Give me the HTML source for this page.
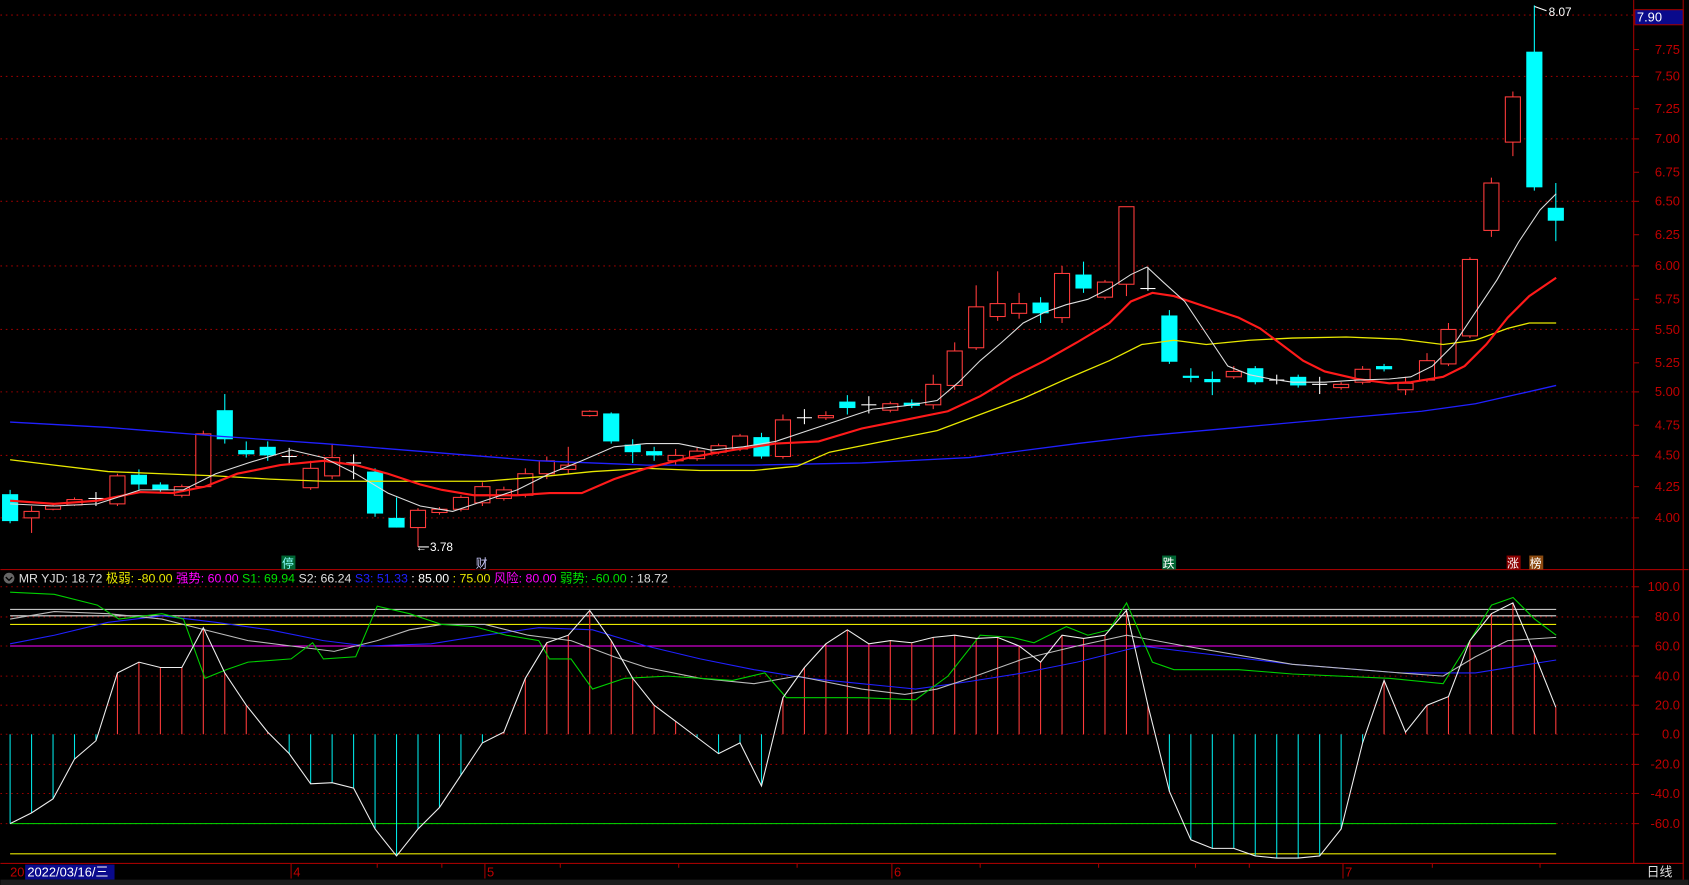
<!DOCTYPE html>
<html><head><meta charset="utf-8"><style>
html,body{margin:0;padding:0;background:#000;overflow:hidden}
svg{display:block}
text{font-family:"Liberation Sans","Noto Sans CJK SC",sans-serif}
</style></head><body>
<svg id="s" width="1689" height="885" viewBox="0 0 1568 822" xmlns="http://www.w3.org/2000/svg"></svg>
<script>
const s=document.getElementById('s');let h='';
const R='#a00000';
// grid dotted lines main
const labs=[[7.75,46],[7.50,71],[7.25,101],[7.00,129],[6.75,160],[6.50,187],[6.25,218],[6.00,247],[5.75,278],[5.50,306],[5.25,337],[5.00,364],[4.75,395],[4.50,423],[4.25,452],[4.00,481]];
[14,71,129,187,247,306,364,423,481].forEach(y=>h+=`<line x1="0" y1="${y}" x2="1517" y2="${y}" stroke="#900" stroke-dasharray="1.5 3.5" stroke-width="1"/>`);
labs.forEach(([p,y])=>{h+=`<line x1="1517" y1="${y}" x2="1522" y2="${y}" stroke="${R}"/><text x="1560" y="${y+4}" fill="#c00000" font-size="12" text-anchor="end">${p.toFixed(2)}</text>`});
// indicator grid
const il=[[100,545],[80,573],[60,600],[40,628],[20,655],[0,682],[-20,710],[-40,737],[-60,765]];
il.forEach(([v,y])=>{h+=`<line x1="0" y1="${y}" x2="1517" y2="${y}" stroke="#900" stroke-dasharray="1.5 3.5"/><line x1="1517" y1="${y}" x2="1522" y2="${y}" stroke="${R}"/><text x="1560" y="${y+4}" fill="#c00000" font-size="12" text-anchor="end">${v.toFixed(2).replace(/(\.\d)0$/,'$1')}</text>`});
// frames
h+=`<line x1="1517" y1="0" x2="1517" y2="802" stroke="${R}"/><line x1="1563" y1="0" x2="1563" y2="822" stroke="${R}"/>`;
h+=`<line x1="0" y1="529" x2="1568" y2="529" stroke="${R}"/><line x1="0" y1="802" x2="1563" y2="802" stroke="${R}"/>`;
h+=`<rect x="1517" y="529" width="46" height="273" fill="none" stroke="${R}"/>`;
// candles
const C=[['c',459,484,455,486],['r',475,481,470,495],['r',470,473,468,474],['r',464,469,462,470],['w',463,463,457,470],['r',442,468,440,470],['c',441,450,436,455],['c',450,455,448,457],['r',452,460,450,462],['r',403,452,400,453],['c',381,408,366,412],['c',418,422,410,425],['c',415,423,410,428],['w',424,424,416,432],['r',435,453,428,455],['r',425,442,412,445],['w',430,430,422,445],['c',438,477,435,480],['c',481,490,462,490],['r',474,490,472,508],['r',473,476,471,478],['r',462,473,460,475],['r',452,467,448,470],['r',455,463,452,465],['r',440,460,435,462],['r',428,440,424,445],['r',432,436,415,440],['r',382,386,381,387],['c',384,410,383,412],['c',413,420,408,430],['c',419,423,415,428],['r',423,428,417,432],['r',419,426,416,428],['r',414,420,412,422],['r',405,417,403,419],['c',406,424,402,426],['r',390,424,385,426],['w',388,388,380,394],['r',386,388,382,390],['c',373,379,367,385],['w',376,376,368,384],['r',375,381,373,383],['c',374,377,371,379],['r',357,376,348,380],['r',326,358,318,362],['r',285,323,265,325],['r',282,294,252,298],['r',282,291,272,296],['c',281,291,276,300],['r',254,295,247,300],['c',255,268,243,272],['r',262,276,260,278],['r',192,264,192,275],['w',268,268,248,270],['c',293,336,288,338],['c',349,351,342,355],['c',352,355,345,367],['r',345,350,340,352],['c',342,355,340,357],['w',353,353,348,357],['c',350,358,348,360],['w',357,357,350,366],['r',357,360,355,362],['r',343,355,340,357],['c',340,343,338,345],['r',356,362,350,367],['r',335,353,328,355],['r',306,338,300,340],['r',241,312,239,314],['r',170,214,165,220],['r',90,132,85,145],['c',48,174,5,177],['c',193,205,170,224]];
C.forEach((c,i)=>{const x=9+i*19.94;const [t,a,b,hi,lo]=c;
 const col=t=='r'?'#ff3b3b':t=='c'?'#00ffff':'#fff';
 h+=`<line x1="${x}" y1="${hi}" x2="${x}" y2="${lo}" stroke="${col}"/>`;
 if(t=='w'){h+=`<line x1="${x-7}" y1="${a}" x2="${x+7}" y2="${a}" stroke="#fff"/>`}
 else if(t=='c'){h+=`<rect x="${x-7.5}" y="${a}" width="15" height="${Math.max(b-a,2)}" fill="#00ffff"/>`}
 else{h+=`<rect x="${x-7}" y="${a}" width="14" height="${Math.max(b-a,2)}" fill="#000" stroke="#ff3b3b"/>`}
});
const pl=(pts,col,w)=>{h+=`<polyline fill="none" stroke="${col}" stroke-width="${w}" points="${pts.map(p=>p.join(',')).join(' ')}"/>`};
pl([[9,392],[100,397],[200,405],[300,412],[400,420],[500,428],[600,432],[700,432],[800,430],[900,425],[1000,412],[1060,405],[1150,397],[1250,388],[1320,382],[1370,375],[1410,366],[1445,358]],'#2020ff',1.2);
pl([[9,427],[50,432],[100,438],[150,440],[200,442],[250,445],[300,447],[350,447],[400,447],[450,447],[500,443],[550,438],[600,435],[650,437],[700,437],[740,433],[770,420],[820,410],[870,400],[910,385],[950,370],[990,352],[1030,335],[1060,320],[1090,316],[1120,320],[1160,316],[1200,314],[1250,313],[1300,315],[1340,320],[1370,316],[1400,305],[1420,300],[1445,300]],'#e8e800',1.2);
pl([[9,465],[50,468],[90,465],[130,457],[160,458],[190,452],[220,440],[260,432],[300,428],[330,432],[360,440],[390,450],[410,455],[440,460],[480,460],[510,458],[540,458],[570,445],[600,435],[640,425],[680,418],[720,412],[760,410],[800,398],[840,390],[880,382],[910,368],[940,350],[970,335],[1000,318],[1030,300],[1050,280],[1070,272],[1090,275],[1120,285],[1150,295],[1170,305],[1190,320],[1210,335],[1230,345],[1260,352],[1290,356],[1310,355],[1340,350],[1360,340],[1380,320],[1400,295],[1420,275],[1445,258]],'#ff1a1a',2);
pl([[9,468],[50,470],[90,468],[130,455],[170,455],[200,440],[230,430],[270,418],[300,425],[330,440],[360,458],[390,470],[420,475],[450,465],[480,455],[510,440],[540,428],[570,415],[600,412],[630,412],[660,418],[690,415],[720,410],[750,400],[780,390],[810,380],[840,377],[870,372],[890,355],[910,335],[930,318],[950,300],[970,290],[990,283],[1010,278],[1030,268],[1050,255],[1065,248],[1080,262],[1100,280],[1120,310],[1140,340],[1160,348],[1180,352],[1200,355],[1230,355],[1260,353],[1290,352],[1310,350],[1330,340],[1350,320],[1370,290],[1390,260],[1410,225],[1430,195],[1445,180]],'#ddd',1);
// annotations
h+=`<line x1="388" y1="508" x2="398" y2="508" stroke="#fff"/><text x="399" y="512" fill="#fff" font-size="11">3.78</text><text x="386" y="512" fill="#fff" font-size="10">←</text>`;
h+=`<line x1="1425" y1="6" x2="1436" y2="10" stroke="#fff"/><text x="1438" y="15" fill="#fff" font-size="11">8.07</text>`;
h+=`<rect x="1518" y="9" width="45" height="14" fill="#0a0a8c" stroke="${R}"/><text x="1520" y="20" fill="#fff" font-size="12">7.90</text>`;
const mk=(x,t,bg,fg)=>{h+=`<rect x="${x-6}" y="516" width="13" height="13" fill="${bg}"/><text x="${x}" y="527" fill="${fg}" font-size="11" text-anchor="middle">${t}</text>`};
mk(267,'停','#063','#8ff');mk(447,'财','#000','#ccf');mk(1085,'跌','#063','#fff');mk(1405,'涨','#8b0000','#fff');mk(1426,'榜','#8b4a10','#fff');
// indicator
h+=`<line x1="9" y1="566" x2="1445" y2="566" stroke="#ddd"/><line x1="9" y1="572" x2="1445" y2="572" stroke="#ddd"/>`;
h+=`<line x1="9" y1="580" x2="1445" y2="580" stroke="#e8e800"/><line x1="9" y1="600" x2="1445" y2="600" stroke="#ff00ff"/>`;
h+=`<line x1="9" y1="765" x2="1445" y2="765" stroke="#00e000"/><line x1="9" y1="793" x2="1445" y2="793" stroke="#e8e800"/>`;
const W=[765,755,742,705,688,625,615,620,620,583,625,655,680,700,728,727,732,770,795,770,750,720,690,680,630,597,590,567,595,630,655,670,685,700,690,730,648,620,598,585,598,595,597,592,590,593,592,600,615,590,593,590,567,655,735,780,788,788,795,797,797,795,770,690,632,680,655,647,595,570,560,607,657];
W.forEach((y,i)=>{const x=9+i*19.94;h+=`<line x1="${x}" y1="682" x2="${x}" y2="${y}" stroke="${y<682?'#ff3b3b':'#00e5e5'}"/>`});
pl([[9,598],[50,590],[100,578],[150,572],[200,578],[250,585],[300,595],[340,600],[400,598],[450,590],[500,583],[550,585],[600,600],[650,612],[700,622],[750,630],[800,635],[850,640],[900,633],[950,625],[1000,615],[1060,600],[1100,605],[1200,617],[1300,625],[1370,625],[1445,613]],'#2020ff',1);
pl([[9,575],[50,568],[100,570],[150,575],[190,585],[230,595],[270,600],[310,605],[350,595],[380,585],[410,580],[450,580],[490,590],[530,595],[570,610],[600,620],[650,630],[700,635],[740,628],[800,640],[840,645],[870,640],[900,630],[950,612],[1000,600],[1046,590],[1100,600],[1200,617],[1300,625],[1340,628],[1370,610],[1400,595],[1445,592]],'#bbb',1);
pl([[9,550],[50,552],[90,562],[110,575],[150,570],[170,575],[190,630],[210,622],[230,615],[270,612],[290,597],[300,612],[330,610],[350,563],[380,570],[410,580],[440,582],[470,590],[500,595],[510,612],[530,612],[550,640],[580,630],[620,628],[680,632],[710,625],[730,648],[800,648],[850,650],[880,628],[910,590],[940,592],[960,597],[990,582],[1010,590],[1030,585],[1046,560],[1070,615],[1090,622],[1150,622],[1200,626],[1290,630],[1340,635],[1365,595],[1385,562],[1405,555],[1425,575],[1445,590]],'#00d000',1);
pl(W.map((y,i)=>[9+i*19.94,y]),'#eee',1);
// header
h+=`<circle cx="8" cy="537" r="5" fill="#666"/><path d="M5 536 L8 539 L11 536" stroke="#000" fill="none" stroke-width="1.3"/>`;
h+=`<text x="17" y="541" font-size="11.5"><tspan fill="#ddd">MR YJD: 18.72 </tspan><tspan fill="#e8e800">极弱: -80.00 </tspan><tspan fill="#ff00ff">强势: 60.00 </tspan><tspan fill="#00e000">S1: 69.94 </tspan><tspan fill="#ddd">S2: 66.24 </tspan><tspan fill="#2020ff">S3: 51.33 </tspan><tspan fill="#fff">: 85.00 </tspan><tspan fill="#e8e800">: 75.00 </tspan><tspan fill="#ff00ff">风险: 80.00 </tspan><tspan fill="#00e000">弱势: -60.00 </tspan><tspan fill="#ddd">: 18.72</tspan></text>`;
// bottom axis
[[270,'4'],[450,'5'],[828,'6'],[1247,'7']].forEach(([x,t])=>{h+=`<line x1="${x}" y1="802" x2="${x}" y2="816" stroke="${R}"/><text x="${x+2}" y="814" fill="#c00000" font-size="12">${t}</text>`});
[350,410,520,630,740,910,1020,1110,1160,1330,1430].forEach(x=>h+=`<line x1="${x}" y1="802" x2="${x}" y2="806" stroke="${R}"/>`);
h+=`<text x="9" y="814" fill="#c00000" font-size="12">202</text><rect x="23" y="803" width="83" height="14" fill="#0a0a8c"/><text x="25" y="814" fill="#fff" font-size="12">2022/03/16/三</text>`;
h+=`<text x="1529" y="814" fill="#ddd" font-size="12">日线</text>`;
h+=`<rect x="0" y="817" width="1568" height="5" fill="#1c1c1c"/>`;
s.innerHTML=h;
</script>
</body></html>
